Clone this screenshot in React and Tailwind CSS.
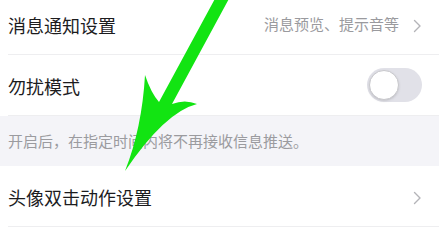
import React from "react";

const font = { fontFamily: '"Noto Sans CJK SC", "Noto Sans", sans-serif' };

const Chevron = () => (
  <svg width="9" height="14" viewBox="0 0 9 14" className="ml-[14px] mt-[2px]">
    <path d="M1.5 1.5 L7 7 L1.5 12.5" fill="none" stroke="#b4b4b8" strokeWidth="1.4" strokeLinecap="round" strokeLinejoin="round" />
  </svg>
);

const Toggle = () => (
  <div className="w-[55px] h-[34px] rounded-full bg-[#e1e1e8] p-[2px] flex items-center -mt-[1px]">
    <div className="w-[30px] h-[30px] rounded-full bg-white border border-[#c8c8cc] shadow-sm" />
  </div>
);

const Row = ({ title, children }) => (
  <div className="pl-2 bg-white">
    <div className="h-[61px] flex items-center justify-between border-b border-[#eeeef0] pr-[17px]">
      <span className="text-[18px] text-[#1c1c1e] mt-[2px]">{title}</span>
      <div className="flex items-center mt-[1px]">{children}</div>
    </div>
  </div>
);

// 绿色箭头覆盖层
const Arrow = () => (
  <svg className="absolute inset-0 pointer-events-none" width="439" height="231" viewBox="0 0 439 231">
    <path
      d="M125 171 Q142 128 145 75 Q151 93 159 102 L217 -5 L231 -5 L172 104 Q185 99 197 104 Q165 112 125 171 Z"
      fill="#12e412"
    />
  </svg>
);

export default function App() {
  return (
    <div className="relative w-[439px] h-[231px] overflow-hidden bg-white" style={font}>
      <div className="-mt-[6px]">
        <Row title="消息通知设置">
          <span className="text-[15px] text-[#9a9a9e]">消息预览、提示音等</span>
          <Chevron />
        </Row>
        <Row title="勿扰模式">
          <Toggle />
        </Row>
        <div className="h-[50px] bg-[#f4f4f8] flex items-center pl-2">
          <span className="text-[15px] text-[#9b9b9f] mt-[1px]">开启后，在指定时间内将不再接收信息推送。</span>
        </div>
        <Row title="头像双击动作设置">
          <Chevron />
        </Row>
      </div>
      <Arrow />
    </div>
  );
}
